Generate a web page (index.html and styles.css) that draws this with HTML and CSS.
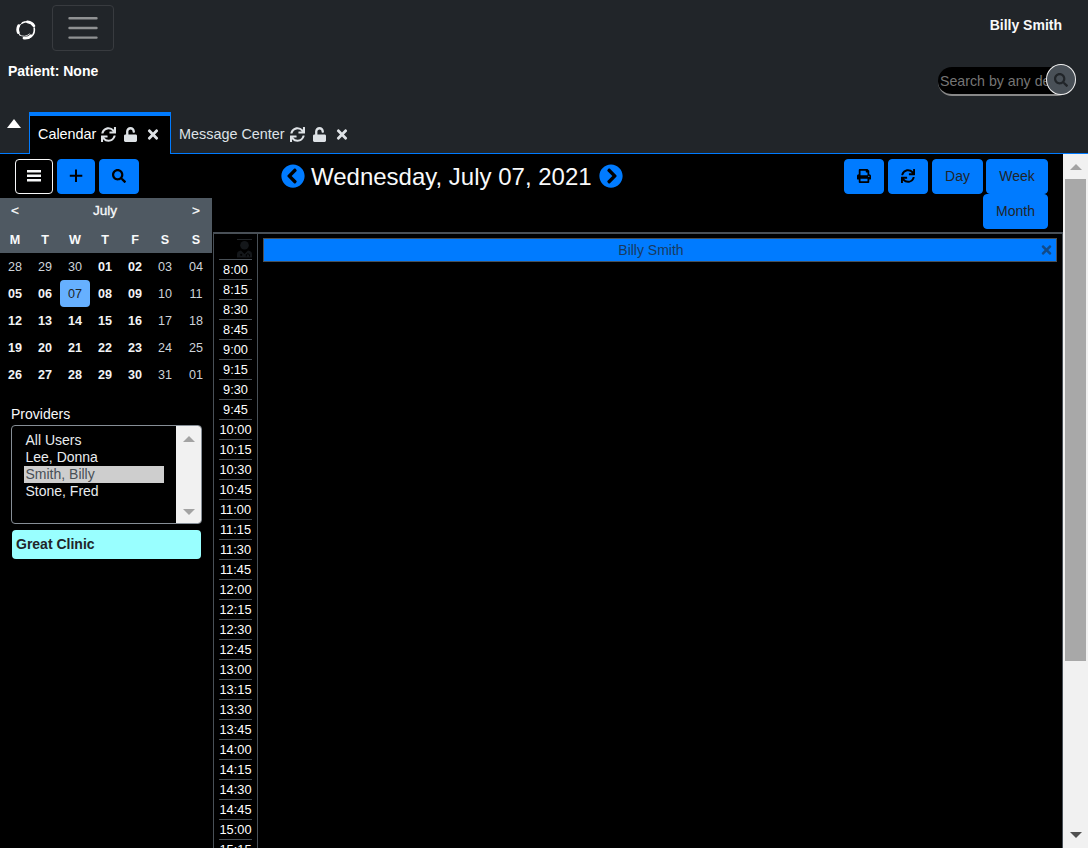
FILE: index.html
```html
<!DOCTYPE html>
<html lang="en">
<head>
<meta charset="utf-8">
<title>Calendar</title>
<link rel="stylesheet" href="styles.css">
</head>
<body>
<svg class="sprite" aria-hidden="true">
  <symbol id="sync" viewBox="0 0 512 512"><path d="M440.65 12.57l4 82.77A247.16 247.16 0 0 0 255.83 8C134.73 8 33.91 94.92 12.29 209.82A12 12 0 0 0 24.09 224h49.05a12 12 0 0 0 11.67-9.26 175.91 175.91 0 0 1 317-56.94l-101.46-4.86a12 12 0 0 0-12.57 12v47.41a12 12 0 0 0 12 12H500a12 12 0 0 0 12-12V12a12 12 0 0 0-12-12h-47.37a12 12 0 0 0-11.98 12.57zM255.83 432a175.61 175.61 0 0 1-146-77.8l101.8 4.87a12 12 0 0 0 12.57-12v-47.4a12 12 0 0 0-12-12H12a12 12 0 0 0-12 12V500a12 12 0 0 0 12 12h47.35a12 12 0 0 0 12-12.6l-4.15-82.57A247.17 247.17 0 0 0 255.83 504c121.11 0 221.93-86.92 243.55-201.82a12 12 0 0 0-11.8-14.18h-49.05a12 12 0 0 0-11.67 9.26A175.86 175.86 0 0 1 255.83 432z"/></symbol>
  <symbol id="unlock" viewBox="0 0 448 512"><path d="M400 256H152V152.9c0-39.6 31.7-72.5 71.3-72.9 40-.4 72.7 32.1 72.7 72v16c0 13.3 10.7 24 24 24h32c13.3 0 24-10.7 24-24v-16C376 68 307.5-.3 223.5 0 139.5.3 72 69.5 72 153.5V256H48c-26.5 0-48 21.5-48 48v160c0 26.5 21.5 48 48 48h352c26.5 0 48-21.5 48-48V304c0-26.5-21.5-48-48-48z"/></symbol>
  <symbol id="times" viewBox="0 0 352 512"><path d="M242.72 256l100.07-100.07c12.28-12.28 12.28-32.19 0-44.48l-22.24-22.24c-12.28-12.28-32.19-12.28-44.48 0L176 189.28 75.93 89.21c-12.28-12.28-32.19-12.28-44.48 0L9.21 111.45c-12.28 12.28-12.28 32.19 0 44.48L109.28 256 9.21 356.07c-12.28 12.28-12.28 32.19 0 44.48l22.24 22.24c12.28 12.28 32.2 12.28 44.48 0L176 322.72l100.07 100.07c12.28 12.28 32.2 12.28 44.48 0l22.24-22.24c12.28-12.28 12.28-32.19 0-44.48L242.72 256z"/></symbol>
  <symbol id="search" viewBox="0 0 512 512"><path d="M505 442.7L405.3 343c-4.5-4.5-10.6-7-17-7H372c27.6-35.3 44-79.7 44-128C416 93.1 322.9 0 208 0S0 93.1 0 208s93.1 208 208 208c48.3 0 92.7-16.4 128-44v16.3c0 6.4 2.5 12.5 7 17l99.7 99.7c9.4 9.4 24.6 9.4 33.9 0l28.3-28.3c9.4-9.4 9.4-24.6.1-34zM208 336c-70.7 0-128-57.2-128-128 0-70.7 57.2-128 128-128 70.7 0 128 57.2 128 128 0 70.7-57.2 128-128 128z"/></symbol>
  <symbol id="print" viewBox="0 0 512 512"><path d="M448 192V77.25c0-8.49-3.37-16.62-9.37-22.63L393.37 9.37c-6-6-14.14-9.37-22.63-9.37H96C78.33 0 64 14.33 64 32v160c-35.35 0-64 28.65-64 64v112c0 8.84 7.16 16 16 16h48v96c0 17.67 14.33 32 32 32h320c17.67 0 32-14.33 32-32v-96h48c8.84 0 16-7.16 16-16V256c0-35.35-28.65-64-64-64zm-64 256H128v-96h256v96zm0-224H128V64h192v48c0 8.84 7.16 16 16 16h48v96zm48 72c-13.25 0-24-10.75-24-24 0-13.26 10.75-24 24-24s24 10.74 24 24c0 13.25-10.75 24-24 24z"/></symbol>
  <symbol id="chevron" viewBox="0 0 512 512"><path d="M256 504C119 504 8 393 8 256S119 8 256 8s248 111 248 248-111 248-248 248zM142.1 273l135.5 135.5c9.4 9.4 24.6 9.4 33.9 0l17-17c9.4-9.4 9.4-24.6 0-33.9L226.9 256l101.6-101.6c9.4-9.4 9.4-24.6 0-33.9l-17-17c-9.4-9.4-24.6-9.4-33.9 0L142.1 239c-9.4 9.4-9.4 24.6 0 34z"/></symbol>
</svg>

<header class="header">
  <div class="navbar">
    <svg class="logo" viewBox="0 0 20 20"><g fill="none" stroke="#fff" stroke-linecap="round"><path d="M4.2 15.6A8 8 0 0 1 8 2.3" stroke-width="1"/><path d="M2.3 12.6A8.3 8.3 0 0 1 2.7 5.6" stroke-width="2.8"/><path d="M6.5 2.8Q13 -.2 17.7 5.5" stroke-width="1.6"/><path d="M11.5 1.8Q16 2.3 17.9 5.8" stroke-width="2.8"/><path d="M18.2 8Q19.3 15.5 12.5 18" stroke-width="1.6"/><path d="M15 15.8Q12.5 18.5 8 18.1" stroke-width="2.8"/><path d="M3.5 14.8Q8.5 18.2 13.5 14" stroke-width=".8"/></g></svg>
    <button class="toggler"><svg width="30" height="30" viewBox="0 0 30 30"><path stroke="#909293" stroke-linecap="round" stroke-width="2.4" d="M1.5 5.3h27M1.5 15h27M1.5 24.6h27"/></svg></button>
    <span class="user">Billy Smith</span>
  </div>
  <div class="patient-row">
    <span class="patient">Patient: None</span>
    <div class="search"><div class="search-input">Search by any demographics</div><button class="search-button"><svg class="icon"><use href="#search"/></svg></button></div>
  </div>
  <nav class="tabs">
    <span class="collapse"><i class="caret"></i></span>
    <div class="tab tab-active"><span class="tab-name">Calendar</span><svg class="icon"><use href="#sync"/></svg><svg class="icon lock"><use href="#unlock"/></svg><svg class="icon close"><use href="#times"/></svg></div>
    <div class="tab tab-last"><span class="tab-name">Message Center</span><svg class="icon"><use href="#sync"/></svg><svg class="icon lock"><use href="#unlock"/></svg><svg class="icon close"><use href="#times"/></svg></div>
  </nav>
</header>

<main class="main">
  <aside class="sidebar">
    <div class="tools">
      <button class="btn btn-outline"><svg class="icon" viewBox="0 0 14 14"><path d="M0 1h14v2.4H0zM0 5.5h14v2.4H0zM0 10h14v2.4H0z"/></svg></button>
      <button class="btn btn-plus"><svg class="icon" viewBox="0 0 14 14"><path d="M6 .5h2v5.3h5.3v2H8V13H6V7.8H.8v-2H6z"/></svg></button>
      <button class="btn btn-icon"><svg class="icon"><use href="#search"/></svg></button>
    </div>
    <table class="month">
      <colgroup><col class="c"><col class="c"><col class="c"><col class="c"><col class="c"><col class="c"><col></colgroup>
      <thead>
        <tr><th>&lt;</th><th colspan="5">July</th><th>&gt;</th></tr>
        <tr><th>M</th><th>T</th><th>W</th><th>T</th><th>F</th><th>S</th><th>S</th></tr>
      </thead>
      <tbody>
        <tr><td class="off">28</td><td class="off">29</td><td class="off">30</td><td>01</td><td>02</td><td class="off">03</td><td class="off">04</td></tr>
        <tr><td>05</td><td>06</td><td class="today">07</td><td>08</td><td>09</td><td class="off">10</td><td class="off">11</td></tr>
        <tr><td>12</td><td>13</td><td>14</td><td>15</td><td>16</td><td class="off">17</td><td class="off">18</td></tr>
        <tr><td>19</td><td>20</td><td>21</td><td>22</td><td>23</td><td class="off">24</td><td class="off">25</td></tr>
        <tr><td>26</td><td>27</td><td>28</td><td>29</td><td>30</td><td class="off">31</td><td class="off">01</td></tr>
      </tbody>
    </table>
    <div class="providers">
      <div class="providers-title">Providers</div>
      <div class="listbox">
        <ul class="options"><li>All Users</li><li>Lee, Donna</li><li class="selected">Smith, Billy</li><li>Stone, Fred</li></ul>
        <div class="list-scroll"><i class="arrow up"></i><i class="arrow down"></i></div>
      </div>
      <div class="facility">Great Clinic</div>
    </div>
  </aside>

  <section class="content">
    <div class="toolbar">
      <div class="date-nav"><svg class="chev"><use href="#chevron"/></svg><h1 class="date">Wednesday, July 07, 2021</h1><svg class="chev chev-right"><use href="#chevron"/></svg></div>
      <div class="views">
        <button class="btn btn-icon"><svg class="icon"><use href="#print"/></svg></button>
        <button class="btn btn-icon"><svg class="icon"><use href="#sync"/></svg></button>
        <button class="btn btn-day">Day</button>
        <button class="btn btn-week">Week</button>
        <button class="btn btn-month">Month</button>
      </div>
    </div>
    <div class="schedule">
      <div class="times">
        <div class="provider-icon"><svg width="15" height="18" viewBox="0 0 15 18" fill="#14171a"><circle cx="7.5" cy="5.2" r="4.3"/><path d="M0 17.5v-3Q0 11 4 10.6L7.5 14 11 10.6q4 .4 4 3.9v3z"/><circle cx="4.2" cy="14.8" r="1.1" fill="#000"/><path d="M9.3 16.5v-1.8q1.6-2 3.2 0v1.8" fill="none" stroke="#000"/></svg></div>
        <div class="slot">8:00</div><div class="slot">8:15</div><div class="slot">8:30</div><div class="slot">8:45</div>
        <div class="slot">9:00</div><div class="slot">9:15</div><div class="slot">9:30</div><div class="slot">9:45</div>
        <div class="slot">10:00</div><div class="slot">10:15</div><div class="slot">10:30</div><div class="slot">10:45</div>
        <div class="slot">11:00</div><div class="slot">11:15</div><div class="slot">11:30</div><div class="slot">11:45</div>
        <div class="slot">12:00</div><div class="slot">12:15</div><div class="slot">12:30</div><div class="slot">12:45</div>
        <div class="slot">13:00</div><div class="slot">13:15</div><div class="slot">13:30</div><div class="slot">13:45</div>
        <div class="slot">14:00</div><div class="slot">14:15</div><div class="slot">14:30</div><div class="slot">14:45</div>
        <div class="slot">15:00</div><div class="slot">15:15</div>
      </div>
      <div class="day">
        <div class="provider-head"><span class="provider-name">Billy Smith</span><svg class="icon close"><use href="#times"/></svg></div>
      </div>
    </div>
  </section>

  <div class="scrollbar"><i class="arrow up"></i><div class="thumb"></div><i class="arrow down dark"></i></div>
</main>
</body>
</html>
```

FILE: styles.css
```css
* { box-sizing: border-box; }
html, body { height: 100%; }
body {
  margin: 0;
  display: flex;
  flex-direction: column;
  overflow: hidden;
  background: #000;
  color: #f8f9fa;
  font: 14px/21px "Liberation Sans", Arial, sans-serif;
}
button { font: inherit; padding: 0; margin: 0; }
.sprite { display: none; }
.icon { display: block; width: 14px; height: 14px; fill: currentColor; flex: none; }

/* header */
.header { height: 154px; flex: none; background: #212529; display: flex; flex-direction: column; }
.navbar { height: 56px; display: flex; align-items: flex-start; padding: 5px 26px 0 16px; }
.logo { width: 20px; height: 20px; margin-top: 15px; }
.toggler {
  width: 62px; height: 46px; margin-left: 16px;
  background: none; border: 1px solid #383b3f; border-radius: 4px;
  display: flex; align-items: center; justify-content: center;
}
.user { margin-left: auto; margin-top: 10px; font-weight: 700; }
.patient-row { height: 56px; display: flex; align-items: flex-start; padding: 5px 12px 0 8px; }
.patient { font-weight: 700; color: #fff; }
.search { margin-left: auto; margin-top: 3px; display: flex; width: 138px; height: 32px; }
.search-input {
  width: 133px; flex: none; height: 29px; margin-top: 3px; padding: 0 0 0 2px;
  background: #000; color: #757575; border-bottom: 2px solid #888;
  border-radius: 14px; white-space: nowrap; overflow: hidden; line-height: 28px; font-size: 14.2px;
}
.search-button {
  width: 30px; height: 31px; margin-left: -25px; border-radius: 50%; flex: none;
  background: #495057; border: 1px solid #f0f0f0; color: #212529;
  display: flex; align-items: center; justify-content: center; position: relative;
}
.tabs { height: 42px; display: flex; color: #dee2e6; }
.collapse { width: 29px; padding: 7px 0 0 7px; border-bottom: 1px solid #007bff; }
.caret { display: block; width: 0; border: 7.5px solid transparent; border-top: 0; border-bottom: 9px solid #fff; }
.tab { display: flex; align-items: center; padding: 3px 8px 0; border-bottom: 1px solid #007bff; }
.tab-name { font-size: 14.4px; }
.tab .icon { width: 15px; height: 15px; margin-left: 5px; }
.tab .lock { width: 13px; margin-left: 8px; }
.tab .close { width: 12px; margin-left: 10px; }
.tab-active { width: 142px; padding: 0 8px 2px; color: #fff; background: #000; border: 1px solid #007bff; border-top-width: 4px; border-bottom: 0; }
.tab-active .icon { color: #dee2e6; }
.tab-last { flex: 1; }

/* buttons */
.btn {
  height: 35px; border: 1px solid #007bff; border-radius: 4px; background: #007bff; color: #000;
  display: flex; align-items: center; justify-content: center;
}
.btn-outline { width: 38px; background: #000; color: #f8f9fa; border-color: #f8f9fa; }
.btn-plus { width: 38px; }
.btn-icon { width: 40px; }
.btn-icon .icon { margin-top: -1px; }
.btn-outline .icon, .btn-plus .icon { margin-top: -1px; }
.btn-day { width: 51px; color: #212529; }
.btn-week { width: 62px; margin-left: -1px; color: #212529; }
.btn-month { width: 65px; color: #212529; }

/* sidebar */
.main { flex: 1; min-height: 0; display: flex; }
.sidebar { width: 212px; flex: none; }
.tools { height: 44px; display: flex; gap: 4px; padding: 5px 0 0 15px; }
.month { width: 212px; table-layout: fixed; border-collapse: collapse; font-size: 12.6px; line-height: 25px; text-align: center; }
.month .c { width: 30px; }
.month th, .month td { padding: 2px 0 0; height: 27px; font-weight: 700; }
.month td { color: #f1f3f5; }
.month thead { background: #4f5962; }
.month th { height: 27.5px; }
.month thead tr:first-child th { padding: 0 0 2px; font-size: 13.6px; font-weight: 400; -webkit-text-stroke: .3px; }
.month td.off { font-weight: 400; color: #ced4da; }
.month td.today { background: #66b0ff; color: #212529; border-radius: 4px; font-weight: 400; }
.providers { padding: 16px 10px 0 11px; }
.providers-title { height: 21px; }
.listbox { height: 99px; border: 1px solid #868e96; border-radius: 4px; display: flex; overflow: hidden; }
.options { list-style: none; margin: 0; padding: 6px 12px 0; flex: 1; line-height: 17px; color: #e9ecef; }
.options li { padding-left: 1.5px; }
.options .selected { background: #cecece; color: #495057; }
.list-scroll { width: 25px; background: #f1f1f1; display: flex; flex-direction: column; justify-content: space-between; align-items: center; padding: 10px 0 8px; }
.arrow { display: block; border: 6px solid transparent; flex: none; }
.up { border-top: 0; border-bottom-color: #a3a3a3; }
.down { border-bottom: 0; border-top-color: #a3a3a3; }
.dark { border-top-color: #505050; }
.facility { height: 29px; margin: 6px 1px 0 1px; padding-left: 4px; border-radius: 4px; background: #9ff; color: #212529; font-weight: 700; line-height: 29px; }

/* schedule */
.content { flex: 1; min-width: 0; display: flex; flex-direction: column; overflow: hidden; }
.toolbar { height: 78px; flex: none; display: flex; justify-content: space-between; padding: 5px 15px 0 69px; }
.date-nav { height: 35px; display: flex; align-items: center; gap: 6px; margin-top: -1px; }
.date { margin: 0; font-size: 24px; font-weight: 400; white-space: nowrap; width: 282px; padding-top: 2px; }
.chev { width: 24px; height: 24px; fill: #007bff; }
.chev-right { transform: scaleX(-1); }
.views { width: 204px; display: flex; flex-wrap: wrap; justify-content: flex-end; align-content: flex-start; column-gap: 4px; }
.schedule { flex: 1; min-height: 0; display: flex; border-top: 2px solid #495057; border-right: 1px solid #495057; margin-left: 1px; }
.times { width: 45px; flex: none; padding: 5px 5px 0; border: solid #495057; border-width: 0 1px; }
.provider-icon { width: 15px; height: 20px; margin-left: auto; border-top: 1px solid #212529; }
.slot { height: 20px; border-top: 1px solid #495057; font-size: 12.8px; line-height: 19px; text-align: center; white-space: nowrap; color: #fff; }
.day { flex: 1; padding: 4px 5px; }
.provider-head { height: 24px; border: 1px solid #495057; background: #007bff; color: #212529; display: flex; align-items: center; padding-right: 4px; }
.provider-name { flex: 1; text-align: center; padding-right: 3px; opacity: .75; }
.provider-head .close { width: 11px; opacity: .55; }

/* page scrollbar */
.scrollbar { width: 25px; flex: none; background: #f1f1f1; display: flex; flex-direction: column; align-items: center; padding: 10px 0 10px; }
.thumb { width: 21px; height: 482px; margin: 9px 0 auto; background: #a8a8a8; }
```
